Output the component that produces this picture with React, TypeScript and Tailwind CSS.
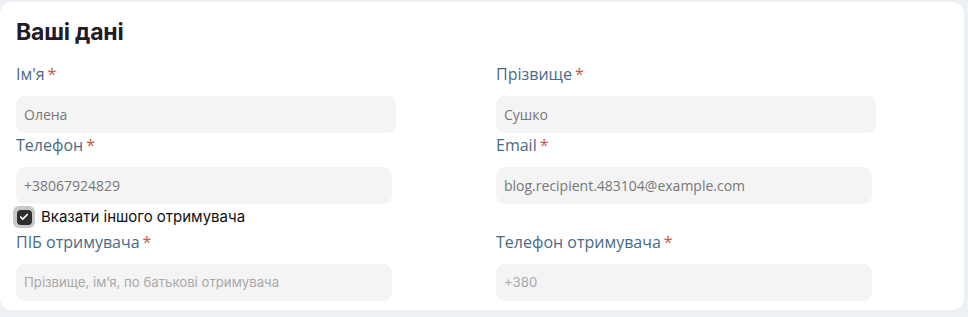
import { Check } from "lucide-react";

type Field = {
  label: string;
  value?: string;
  placeholder?: string;
  width: string;
};

const sansFont = { fontFamily: '"Open Sans", "Noto Sans", sans-serif' };

function FormField({ label, value, placeholder, width }: Field) {
  return (
    <div className="flex flex-col">
      <div
        className="flex h-5 items-center text-[16px] leading-5 text-[#4a6b86]"
        style={sansFont}
      >
        <span>{label}</span>
        <span className="ml-[3px] text-[#c9573f]">*</span>
      </div>
      <div
        className={`mt-3 flex h-[37px] items-center rounded-[9px] bg-[#f4f4f4] px-2 ${width}`}
      >
        {value ? (
          <span className="text-[14px] text-[#777777]" style={sansFont}>
            {value}
          </span>
        ) : (
          <span className="font-['Inter'] text-[13.2px] text-[#a8a8a8]">
            {placeholder}
          </span>
        )}
      </div>
    </div>
  );
}

export default function App() {
  return (
    <div className="h-[317px] w-[968px] bg-[#edf1f5] pt-[2px]">
      <div className="h-[308px] w-[964px] rounded-[12px] bg-white px-4 pt-[14px]">
        <h2 className="font-['Inter'] text-[23px] font-bold leading-8 tracking-[-0.2px] text-[#241a26]">
          Ваші дані
        </h2>

        <div className="mt-[16px] grid grid-cols-[480px_480px]">
          <FormField label="Ім'я" value="Олена" width="w-[380px]" />
          <FormField label="Прізвище" value="Сушко" width="w-[380px]" />
        </div>

        <div className="mt-[2px] grid grid-cols-[480px_480px]">
          <FormField label="Телефон" value="+38067924829" width="w-[376px]" />
          <FormField
            label="Email"
            value="blog.recipient.483104@example.com"
            width="w-[376px]"
          />
        </div>

        <label className="flex h-[26px] items-center gap-[6px]">
          <span className="flex h-[22px] w-[22px] -ml-[3px] items-center justify-center rounded-[6px] bg-[#c8c8c8]">
            <span className="flex h-[15px] w-[15px] items-center justify-center rounded-[4px] bg-[#2e2e2e]">
              <Check className="h-[10px] w-[10px] text-white" strokeWidth={4} />
            </span>
          </span>
          <span className="font-['Inter'] text-[15px] text-[#111]">
            Вказати іншого отримувача
          </span>
        </label>

        <div className="mt-[2px] grid grid-cols-[480px_480px]">
          <FormField
            label="ПІБ отримувача"
            placeholder="Прізвище, імʼя, по батькові отримувача"
            width="w-[376px]"
          />
          <FormField label="Телефон отримувача" placeholder="+380" width="w-[376px]" />
        </div>
      </div>
    </div>
  );
}
